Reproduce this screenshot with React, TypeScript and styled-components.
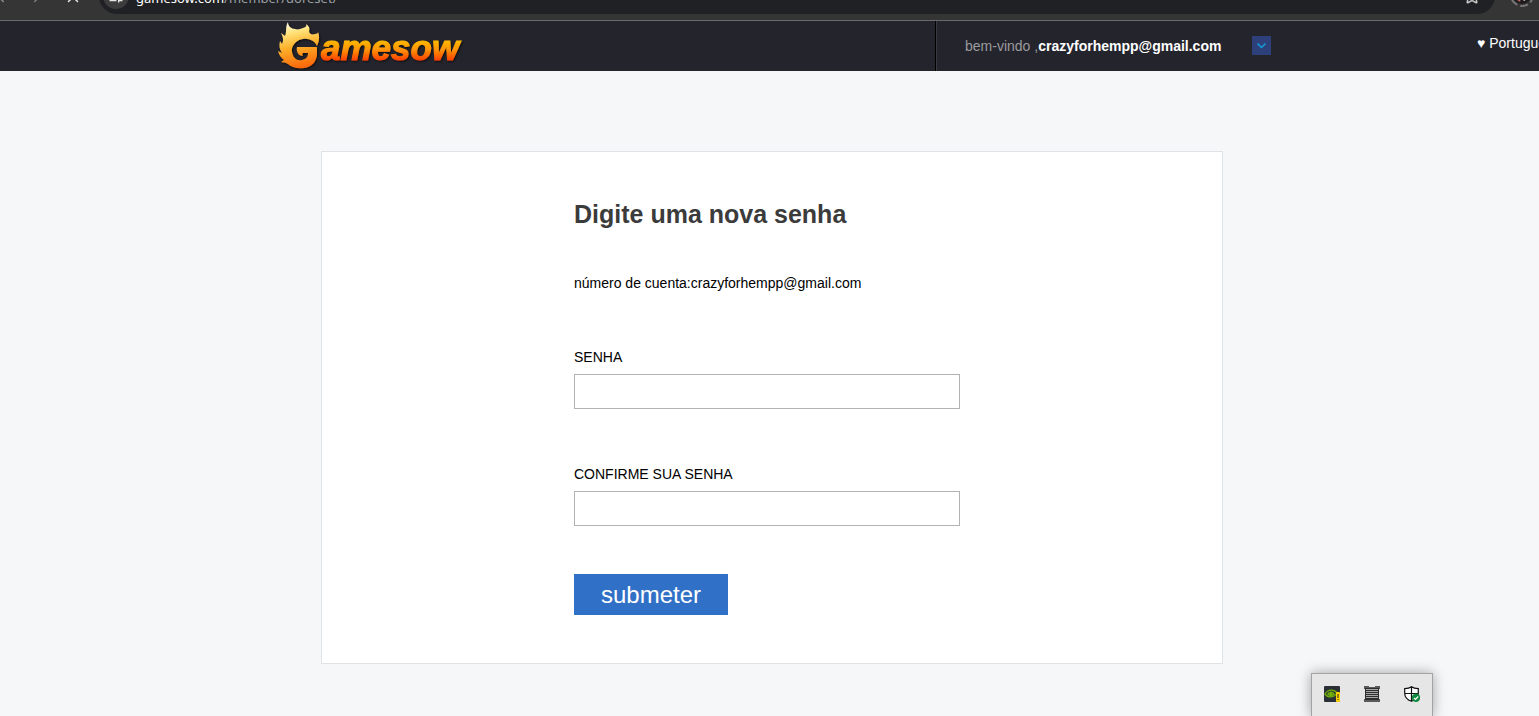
import React from "react";
import styled, { createGlobalStyle } from "styled-components";
import { ChevronLeft, ChevronRight, X, Star, SlidersHorizontal } from "lucide-react";

const GlobalStyle = createGlobalStyle`
  * { box-sizing: border-box; }
  body {
    margin: 0;
    background: #f6f7f9;
    color: #000;
    font: 14px/20px "Liberation Sans", Arial, sans-serif;
    overflow-x: hidden;
  }
`;

const BrowserBar = styled.div`
  height: 21px;
  display: flex;
  align-items: flex-end;
  justify-content: space-between;
  overflow: hidden;
  background: #353535;
  border-bottom: 1px solid #6a6a6c;
`;

const NavButtons = styled.div`
  flex: none;
  display: flex;
  align-items: center;
  width: 95px;
  height: 46px;
  gap: 18px;
  margin-left: -8px;
`;

const BarButton = styled.button<{ $color: string }>`
  display: flex;
  padding: 0;
  border: 0;
  background: none;
  color: ${(p) => p.$color};
`;

const AddressBar = styled.div`
  flex: 1;
  height: 36px;
  margin: 0 14px 6px 12px;
  padding: 0 14px 0 4px;
  display: flex;
  align-items: center;
  gap: 7px;
  border-radius: 18px;
  background: #202124;
  color: #9aa0a6;
`;

const SiteInfo = styled.button`
  display: flex;
  align-items: center;
  justify-content: center;
  width: 26px;
  height: 26px;
  padding: 0;
  border: 0;
  border-radius: 13px;
  background: #3c3c3c;
  color: #e3e3e3;
`;

const Url = styled.span`
  flex: 1;
  padding-top: 4px;
  font: 13px/20px "Noto Sans", sans-serif;
  white-space: nowrap;

  b {
    font-weight: 400;
    color: #fff;
  }
`;

const Avatar = styled.svg`
  flex: none;
  width: 26px;
  height: 26px;
  margin: 0 4px 12px 0;
`;

const SiteHeader = styled.header`
  display: grid;
  grid-template-columns: 1fr 994px 1fr;
  height: 50px;
  padding-left: 11px;
  overflow: hidden;
  background: #24242d;
`;

const HeaderInner = styled.div`
  grid-column: 2;
  display: flex;
  justify-content: space-between;
`;

const LogoLink = styled.a`
  display: block;
  width: 192px;
  height: 50px;
`;

const Account = styled.div`
  display: flex;
  align-items: center;
  justify-content: space-between;
  width: 336px;
  padding: 0 1px 0 28px;
  border-left: 1px solid #3a3a42;
  box-shadow: -1px 0 #000;
  color: #9b9b9d;

  b {
    color: #fff;
  }
`;

const MenuButton = styled.button`
  display: flex;
  align-items: center;
  justify-content: center;
  width: 19px;
  height: 19px;
  margin-bottom: 1px;
  padding: 0;
  border: 0;
  background: #2d4079;
`;

const Language = styled.a`
  padding: 12px 0 0 205px;
  min-width: 0;
  overflow: hidden;
  white-space: nowrap;
  color: #fff;
  text-decoration: none;
`;

const Main = styled.main`
  padding: 80px 0 52px 5px;
`;

const Panel = styled.section`
  max-width: 902px;
  margin: 0 auto;
  padding: 48px 24px 48px 252px;
  border: 1px solid #dfe3e6;
  background: #fff;
`;

const Title = styled.h1`
  margin: 0;
  font-size: 25px;
  line-height: 28px;
  color: #3b3b3b;
`;

const AccountLine = styled.p`
  margin: 45px 0 54px;
`;

const Field = styled.div`
  display: flex;
  flex-direction: column;
  gap: 7px;
  margin-bottom: 55px;

  &:last-of-type {
    margin-bottom: 48px;
  }
`;

const TextInput = styled.input`
  width: 100%;
  max-width: 386px;
  height: 35px;
  padding: 0 8px;
  border: 1px solid #b2b2b2;
  border-radius: 0;
  background: #fff;
  font: inherit;
`;

const Submit = styled.button`
  display: block;
  width: 154px;
  height: 41px;
  padding: 0;
  border: 0;
  background: #3170c7;
  color: #fff;
  font: 24px/40px "Liberation Sans", Arial, sans-serif;
`;

const Tray = styled.aside`
  position: fixed;
  right: 106px;
  bottom: -1px;
  display: flex;
  gap: 24px;
  width: 122px;
  height: 44px;
  padding: 12px 12px 0;
  border: 1px solid #a3a3a3;
  background: #e6e6e6;
  box-shadow: 0 0 12px rgba(0, 0, 0, 0.35);
`;

const TrayButton = styled.button`
  width: 16px;
  height: 16px;
  padding: 0;
  border: 0;
  background: none;

  svg {
    display: block;
  }
`;

function Logo() {
  return (
    <svg width="192" height="50" viewBox="0 0 192 50" role="img" aria-label="Gamesow">
      <defs>
        <linearGradient id="flame" x1="0.2" y1="0" x2="0.4" y2="1">
          <stop offset="0" stopColor="#fffdf0" />
          <stop offset="0.25" stopColor="#ffe27a" />
          <stop offset="0.55" stopColor="#fdb02a" />
          <stop offset="1" stopColor="#fa6a0c" />
        </linearGradient>
        <linearGradient id="word" gradientUnits="userSpaceOnUse" x1="0" y1="17" x2="0" y2="40">
          <stop offset="0" stopColor="#ffc400" />
          <stop offset="0.5" stopColor="#ff9508" />
          <stop offset="1" stopColor="#ff3c00" />
        </linearGradient>
        <filter id="shade" x="-5%" y="-5%" width="115%" height="120%">
          <feDropShadow dx="1" dy="1" stdDeviation="1" floodColor="#000" floodOpacity="0.7" />
        </filter>
      </defs>
      <g filter="url(#shade)">
        <path
          fill="url(#flame)"
          d="M10 1 C10 5 13 8 17 8 C20 9 22 8 25 7 C28 6 29 5 28 3 C31 5 32 7 31 10 C31 13 34 14 37 13 C39 13 40 12 40 11 C42 16 41 21 39 25 C37 20 31 17 25 18 C18 19 13 25 14 31 C15 37 19 40 24 39 C28 38 30 36 30 32 L25 32 C24 33 24 34 25 35 C20 35 18 30 19 26 L39 26 L39 34 C38 41 34 46 26 47 C19 48 13 46 10 43 C7 41 6 42 3 41 L6 39 C3 37 1 34 0 30 L4 32 C1 28 1 24 2 20 L4 23 C6 19 5 16 3 12 L7 15 C9 11 7 6 10 1 Z"
        />
        <text
          x="43"
          y="39"
          fill="url(#word)"
          stroke="url(#word)"
          strokeWidth="1"
          fontFamily="Liberation Sans, Arial, sans-serif"
          fontSize="35"
          fontWeight="700"
          fontStyle="italic"
        >
          amesow
        </text>
      </g>
    </svg>
  );
}

function GpuIcon() {
  return (
    <svg width="16" height="16" viewBox="0 0 16 16">
      <rect width="16" height="16" rx="1" fill="#2b2f36" />
      <path d="M1 8 C4 3 10 3 13 7 C10 12 4 12 1 8 Z M4 8 C6 5 9 6 10 8 C8 10 6 10 4 8 Z" fill="none" stroke="#6fae0c" strokeWidth="1.4" />
      <circle cx="7" cy="8" r="1.5" fill="#76b900" />
      <rect x="12" y="6" width="4" height="10" rx="1" fill="#ffd400" />
      <path d="M14 8 V12 M14 13 V14" stroke="#222" strokeWidth="1" />
    </svg>
  );
}

function MemoryIcon() {
  return (
    <svg width="16" height="16" viewBox="0 0 16 16">
      <path d="M0 0 H5 V1 H11 V0 H16 V3 H15 V13 H16 V16 H0 V13 H1 V3 H0 Z" fill="#5a5a5a" />
      <rect x="1" y="2" width="14" height="12" fill="#2e2e2e" />
      <path d="M2 3.5 H14 M2 5.5 H14 M2 7.5 H14 M2 9.5 H14 M2 11.5 H14" stroke="#a8a8a8" strokeWidth="1" />
    </svg>
  );
}

function ShieldIcon() {
  return (
    <svg width="16" height="16" viewBox="0 0 16 16">
      <path d="M7.5 0.7 C5.5 2.3 3 2.6 0.7 2.6 V7 C0.7 11 3.5 14 7.5 15.3 C11.5 14 14.3 11 14.3 7 V2.6 C12 2.6 9.5 2.3 7.5 0.7 Z M7.5 1 V15 M1 7.5 H14" fill="#fff" stroke="#111" strokeWidth="1.2" />
      <circle cx="12" cy="11.8" r="4.2" fill="#10893e" />
      <path d="M10 12 L11.5 13.4 L14.2 10.5" fill="none" stroke="#fff" strokeWidth="1.2" />
    </svg>
  );
}

export default function App() {
  return (
    <>
      <GlobalStyle />
      <BrowserBar>
        <NavButtons>
          <BarButton $color="#8a8a8a" aria-label="Voltar"><ChevronLeft size={18} /></BarButton>
          <BarButton $color="#7a7a7a" aria-label="Avançar"><ChevronRight size={18} /></BarButton>
          <BarButton $color="#e3e3e3" aria-label="Parar"><X size={18} /></BarButton>
        </NavButtons>
        <AddressBar>
          <SiteInfo aria-label="Informações do site"><SlidersHorizontal size={16} /></SiteInfo>
          <Url><b>gamesow.com</b>/member/doreset/</Url>
          <BarButton $color="#c7c7c7" aria-label="Favorito"><Star size={18} /></BarButton>
        </AddressBar>
        <Avatar viewBox="0 0 26 26" role="img" aria-label="Perfil">
          <circle cx="13" cy="13" r="11" fill="none" stroke="#777" strokeWidth="2" strokeDasharray="8 3" />
          <circle cx="13" cy="13" r="9" fill="#201b1c" />
          <path d="M8 15 L12 16 L11 20 L8 18 Z" fill="#b4635c" />
          <path d="M13 16 L17 14 L18 17 L15 19 Z" fill="#ececec" />
        </Avatar>
      </BrowserBar>

      <SiteHeader>
        <HeaderInner>
          <LogoLink href="#"><Logo /></LogoLink>
          <Account>
            <span>bem-vindo ,<b>crazyforhempp@gmail.com</b></span>
            <MenuButton aria-label="Menu da conta">
              <svg width="11" height="9" viewBox="0 0 11 9">
                <path d="M1.5 2.5 L5.5 6.5 L9.5 2.5" fill="none" stroke="#129fdc" strokeWidth="1.5" />
              </svg>
            </MenuButton>
          </Account>
        </HeaderInner>
        <Language href="#">♥ Português</Language>
      </SiteHeader>

      <Main>
        <Panel>
          <Title>Digite uma nova senha</Title>
          <AccountLine>número de cuenta:crazyforhempp@gmail.com</AccountLine>
          <form onSubmit={(e) => e.preventDefault()}>
            <Field>
              <label htmlFor="senha">SENHA</label>
              <TextInput id="senha" type="password" />
            </Field>
            <Field>
              <label htmlFor="confirme">CONFIRME SUA SENHA</label>
              <TextInput id="confirme" type="password" />
            </Field>
            <Submit type="submit">submeter</Submit>
          </form>
        </Panel>
      </Main>

      <Tray>
        <TrayButton aria-label="Placa de vídeo"><GpuIcon /></TrayButton>
        <TrayButton aria-label="Memória"><MemoryIcon /></TrayButton>
        <TrayButton aria-label="Segurança"><ShieldIcon /></TrayButton>
      </Tray>
    </>
  );
}
